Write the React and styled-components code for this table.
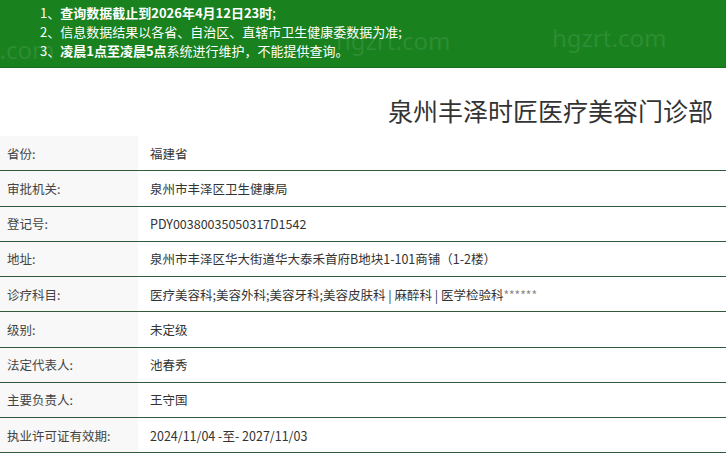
import React from "react";
import styled, { createGlobalStyle } from "styled-components";

const GlobalStyle = createGlobalStyle`
  html, body {
    margin: 0;
    padding: 0;
    background: #fff;
  }
  body {
    font-family: "Noto Sans CJK SC", "Noto Sans", sans-serif;
    color: #333;
  }
`;

const Page = styled.div`
  width: 726px;
  height: 454px;
  overflow: hidden;
`;

const Notice = styled.ul`
  position: relative;
  margin: 0;
  height: 68px;
  box-sizing: border-box;
  padding: 3px 0 0 40px;
  list-style: none;
  background: #19821f;
  border-bottom: 1px solid #166e1c;
  color: #fff;
  font-size: 13px;
  line-height: 19px;
  overflow: hidden;

  li {
    position: relative;
    z-index: 1;
    white-space: nowrap;
  }

  b {
    font-weight: 700;
  }
`;

const Mark = styled.span`
  position: absolute;
  left: ${(p) => p.x}px;
  top: ${(p) => p.y}px;
  font-family: "Noto Sans", sans-serif;
  font-size: 24px;
  line-height: 1;
  color: rgba(255, 255, 255, 0.1);
  pointer-events: none;
`;

const Title = styled.h1`
  margin: 0;
  height: 68px;
  box-sizing: border-box;
  padding: 27px 13px 0 0;
  text-align: right;
  font-size: 25px;
  font-weight: 400;
  line-height: 30px;
  color: #333;
`;

const Row = styled.div`
  display: grid;
  grid-template-columns: 138px 1fr;
  height: 35.25px;
  box-sizing: border-box;
  border-bottom: 1px solid #2f5b3b;
  font-size: 12.5px;
`;

const Label = styled.div`
  display: flex;
  align-items: center;
  padding-left: 7px;
  background: #f7f8f7;
  color: #444;
`;

const Value = styled.div`
  display: flex;
  align-items: center;
  padding-left: 12px;
  color: #333;
  white-space: nowrap;

  .stars {
    color: #888;
    font-size: 12px;
  }
`;

const rows = [
  ["省份:", "福建省"],
  ["审批机关:", "泉州市丰泽区卫生健康局"],
  ["登记号:", "PDY00380035050317D1542"],
  ["地址:", "泉州市丰泽区华大街道华大泰禾首府B地块1-101商铺（1-2楼）"],
  [
    "诊疗科目:",
    <>
      医疗美容科;美容外科;美容牙科;美容皮肤科 | 麻醉科 | 医学检验科
      <span className="stars">******</span>
    </>,
  ],
  ["级别:", "未定级"],
  ["法定代表人:", "池春秀"],
  ["主要负责人:", "王守国"],
  ["执业许可证有效期:", "2024/11/04 -至- 2027/11/03"],
];

export default function App() {
  return (
    <Page>
      <GlobalStyle />
      <Notice>
        <Mark x={-60} y={38}>hgzrt.com</Mark>
        <Mark x={336} y={29}>hgzrt.com</Mark>
        <Mark x={552} y={26}>hgzrt.com</Mark>
        <li>
          1、<b>查询数据截止到2026年4月12日23时</b>;
        </li>
        <li>2、信息数据结果以各省、自治区、直辖市卫生健康委数据为准;</li>
        <li>
          3、<b>凌晨1点至凌晨5点</b>系统进行维护，不能提供查询。
        </li>
      </Notice>
      <Title>泉州丰泽时匠医疗美容门诊部</Title>
      {rows.map(([label, value]) => (
        <Row key={label}>
          <Label>{label}</Label>
          <Value>{value}</Value>
        </Row>
      ))}
    </Page>
  );
}
